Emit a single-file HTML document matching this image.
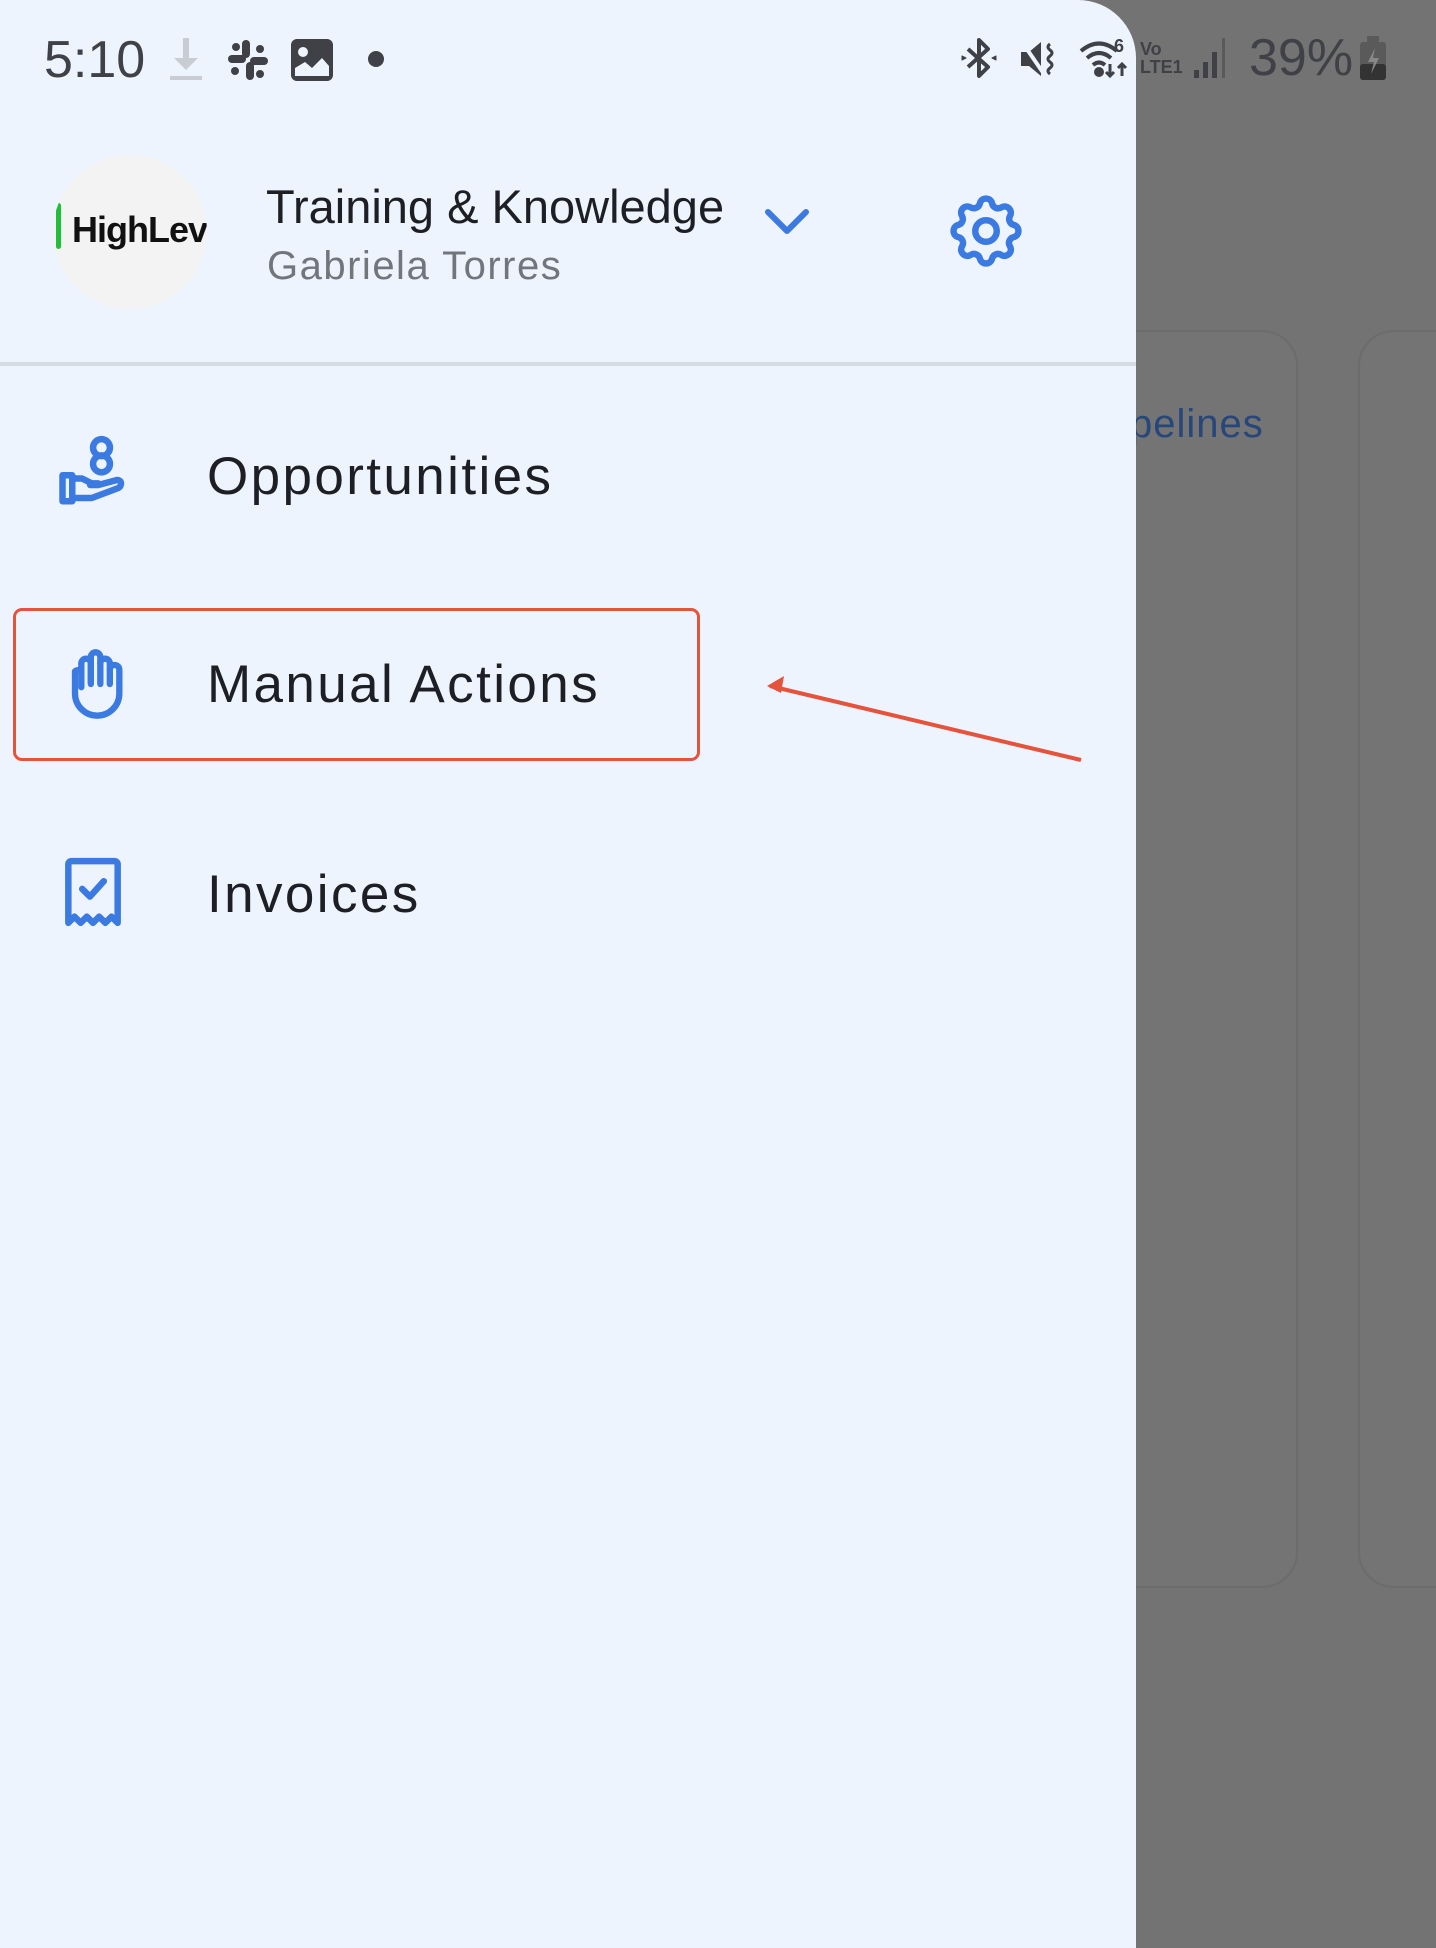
<!DOCTYPE html>
<html><head><meta charset="utf-8"><style>
*{margin:0;padding:0;box-sizing:border-box}
body{width:1436px;height:1948px;position:relative;overflow:hidden;background:#737373;font-family:"Liberation Sans",sans-serif}
.drawer{position:absolute;left:0;top:0;width:1136px;height:1948px;background:#eef4fd;border-top-right-radius:58px}
.t{position:absolute;white-space:nowrap}
.card{position:absolute;border:2px solid #6c6c6c;border-radius:36px;background:#747474}
.m{font-size:53px;color:#1d1f24;letter-spacing:2.4px}
</style></head><body>
<div class="card" style="left:1080px;top:330px;width:218px;height:1258px"></div>
<div class="card" style="left:1358px;top:330px;width:120px;height:1258px"></div>
<div class="t" style="left:1130px;top:402px;font-size:40px;color:#27467a;letter-spacing:1px">pelines</div>
<div class="drawer"></div>
<!-- status bar -->
<div class="t" style="left:44px;top:30px;font-size:52px;color:#3f4147">5:10</div>
<svg style="position:absolute;left:168px;top:36px" width="36" height="46" viewBox="0 0 36 46"><rect x="15" y="2" width="6" height="22" fill="#c9cdd3"/><path d="M6 22 L18 34 L30 22Z" fill="#c9cdd3"/><rect x="2" y="40" width="32" height="4" fill="#c9cdd3"/></svg>
<svg style="position:absolute;left:226px;top:38px" width="44" height="44" viewBox="0 0 44 44" fill="#3f4147"><rect x="2" y="17" width="18" height="8" rx="4"/><rect x="24" y="19" width="18" height="8" rx="4"/><rect x="16" y="2" width="8" height="18" rx="4"/><rect x="20" y="24" width="8" height="18" rx="4"/><circle cx="10" cy="9" r="4"/><circle cx="34" cy="11" r="4"/><circle cx="9" cy="33" r="4"/><circle cx="34" cy="36" r="4"/></svg>
<svg style="position:absolute;left:290px;top:38px" width="44" height="44" viewBox="0 0 44 44"><rect x="1" y="1" width="42" height="42" rx="6" fill="#3f4147"/><circle cx="13" cy="14" r="5" fill="#eef4fd"/><path d="M5 38 L5 30 L15 24 L22 30 L32 20 L39 28 L39 38Z" fill="#eef4fd"/></svg>
<div style="position:absolute;left:368px;top:51px;width:16px;height:16px;border-radius:50%;background:#3f4147"></div>
<svg style="position:absolute;left:960px;top:36px" width="38" height="44" viewBox="0 0 38 44" fill="none" stroke="#3f4147" stroke-width="4" stroke-linejoin="round"><path d="M8 13 L28 31 L19 40 V4 L28 13 L8 31"/><path d="M2 20 l4 2 -4 2z M36 20 l-4 2 4 2z" fill="#3f4147" stroke-width="1"/></svg>
<svg style="position:absolute;left:1018px;top:38px" width="42" height="42" viewBox="0 0 42 42" fill="#3f4147"><path d="M3 14h8l12-10v34L11 28H3z"/><path d="M4 4 L26 36" stroke="#eef4fd" stroke-width="4"/><path d="M32 6q-4 3 0 6q4 3 0 6q-4 3 0 6q4 3 0 6q-4 3 0 6" stroke="#3f4147" stroke-width="3" fill="none"/></svg>
<svg style="position:absolute;left:1078px;top:36px" width="60" height="44" viewBox="0 0 60 44" fill="none" stroke="#3f4147" stroke-width="4"><path d="M3 15q18-15 36 0M9 22q12-10 24 0M15 29q6-5 12 0"/><circle cx="21" cy="36" r="3" fill="#3f4147"/><path d="M32 28v12M28 36l4 4 4-4M44 40V28M40 32l4-4 4 4" stroke-width="3"/><text x="36" y="16" font-size="18" font-weight="bold" fill="#3f4147" stroke="none" font-family="Liberation Sans">6</text></svg>
<div class="t" style="left:1140px;top:40px;font-size:18px;line-height:18px;color:#3f4147;font-weight:bold">Vo<br>LTE1</div>
<svg style="position:absolute;left:1192px;top:36px" width="40" height="44" viewBox="0 0 40 44" fill="#3f4147"><rect x="2" y="34" width="5" height="8"/><rect x="11" y="26" width="5" height="16"/><rect x="20" y="16" width="5" height="26"/><rect x="30" y="2" width="3" height="40" fill="#5a5a5a"/></svg>
<div class="t" style="left:1249px;top:28px;font-size:52px;color:#3f4147">39%</div>
<svg style="position:absolute;left:1358px;top:34px" width="30" height="48" viewBox="0 0 30 48"><rect x="9" y="2" width="12" height="6" fill="#5a5a5a"/><rect x="2" y="8" width="26" height="38" rx="3" fill="#5a5a5a"/><rect x="2" y="30" width="26" height="16" rx="3" fill="#333"/><path d="M17 14 L10 28 H16 L13 40 L21 24 H15Z" fill="#888"/></svg>
<!-- header -->
<div style="position:absolute;left:53px;top:155px;width:154px;height:154px;border-radius:50%;background:#f3f3f3;overflow:hidden">
<div style="position:absolute;left:3px;top:48px;width:5px;height:46px;background:#1fbf3a;border-radius:3px"></div>
<div class="t" style="left:19px;top:54px;font-size:36px;font-weight:bold;color:#111;letter-spacing:-1px">HighLev</div>
</div>
<div class="t" style="left:266px;top:179px;font-size:47px;color:#1d1f24">Training &amp; Knowledge</div>
<div class="t" style="left:267px;top:244px;font-size:40px;color:#71757c;letter-spacing:1.5px">Gabriela Torres</div>
<svg style="position:absolute;left:762px;top:204px" width="50" height="34" viewBox="0 0 50 34" fill="none" stroke="#3b7ae0" stroke-width="6" stroke-linecap="round" stroke-linejoin="round"><path d="M6 8 L25 27 L44 8"/></svg>
<svg style="position:absolute;left:943px;top:188px" width="86" height="86" viewBox="0 0 24 24" fill="none" stroke="#3b7ae0" stroke-width="1.8"><path d="M10.3 4.3c.4-1.8 3-1.8 3.4 0a1.7 1.7 0 0 0 2.6 1.1c1.5-.9 3.3.8 2.4 2.4a1.7 1.7 0 0 0 1 2.5c1.8.4 1.8 3 0 3.4a1.7 1.7 0 0 0-1 2.6c.9 1.5-.8 3.3-2.4 2.4a1.7 1.7 0 0 0-2.6 1c-.4 1.8-3 1.8-3.4 0a1.7 1.7 0 0 0-2.6-1c-1.5.9-3.3-.8-2.4-2.4a1.7 1.7 0 0 0-1-2.6c-1.8-.4-1.8-3 0-3.4a1.7 1.7 0 0 0 1-2.5c-.9-1.6.8-3.3 2.4-2.4 1 .6 2.3.1 2.6-1.1z"/><circle cx="12" cy="12" r="3"/></svg>
<div style="position:absolute;left:0;top:362px;width:1136px;height:4px;background:#d6dce4"></div>
<!-- menu -->
<svg style="position:absolute;left:56px;top:432px" width="78" height="80" viewBox="0 0 24 24" fill="none" stroke="#3b7ae0" stroke-width="2" stroke-linecap="round" stroke-linejoin="round"><circle cx="14" cy="4.5" r="2.6"/><circle cx="14" cy="9.5" r="2.6"/><path d="M2 13h3v8H2z"/><path d="M5 20h6l8-3c1.5-.6 1.3-2.8-.4-2.5L13 16h-2.5"/><path d="M5 14h3l3 1.5h2"/></svg>
<div class="t m" style="left:207px;top:446px">Opportunities</div>
<div style="position:absolute;left:13px;top:608px;width:687px;height:153px;border:3px solid #e5533d;border-radius:9px"></div>
<svg style="position:absolute;left:56px;top:644px" width="76" height="80" viewBox="0 0 24 24" fill="none" stroke="#3b7ae0" stroke-width="2" stroke-linecap="round" stroke-linejoin="round"><path d="M8 13V5.5a1.5 1.5 0 0 1 3 0V12"/><path d="M11 11.5v-8a1.5 1.5 0 0 1 3 0V12"/><path d="M14 5.5a1.5 1.5 0 0 1 3 0V12"/><path d="M17 7.5a1.5 1.5 0 0 1 3 0V15a7 7 0 0 1-14 0v-2.5V8a1.5 1.5 0 0 1 2 0"/></svg>
<div class="t m" style="left:207px;top:654px">Manual Actions</div>
<svg style="position:absolute;left:0;top:0" width="1136" height="800"><path d="M1081 760 L770 686" stroke="#e5533d" stroke-width="4"/><path d="M767 686 L784 676 L781 693Z" fill="#e5533d"/></svg>
<svg style="position:absolute;left:56px;top:854px" width="74" height="76" viewBox="0 0 24 24" fill="none" stroke="#3b7ae0" stroke-width="2.1" stroke-linejoin="round" stroke-linecap="round"><path d="M4 22V3a1 1 0 0 1 1-1h14a1 1 0 0 1 1 1v19l-2-2-2 2-2-2-2 2-2-2-2 2-2-2z"/><path d="M8.5 11l2.5 2.5 4.5-5"/></svg>
<div class="t m" style="left:207px;top:864px">Invoices</div>
</body></html>
